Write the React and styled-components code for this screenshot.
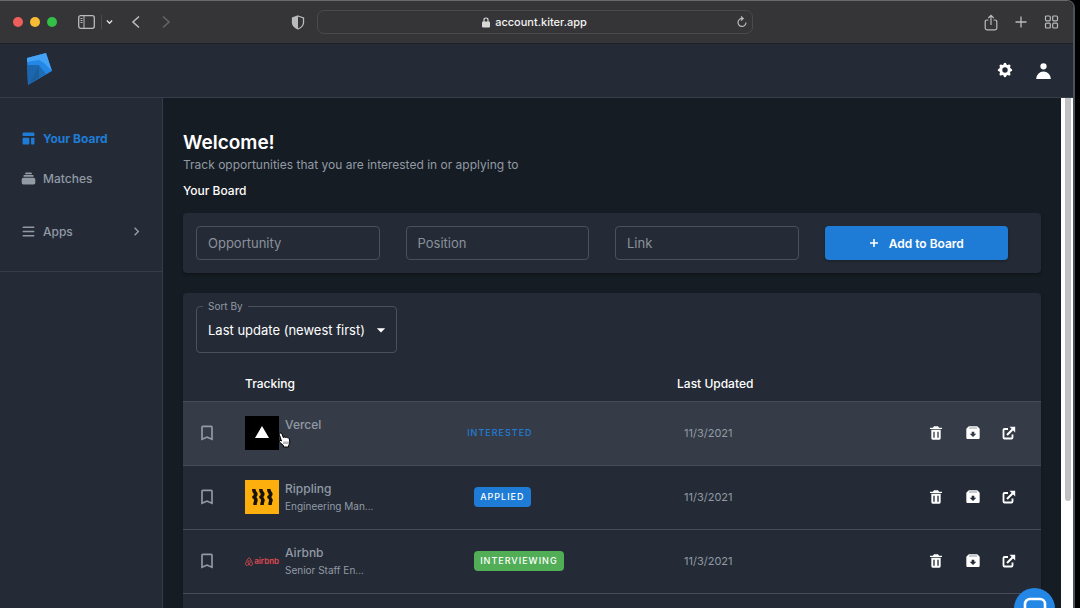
import React, { useState } from 'react';
import styled, { createGlobalStyle } from 'styled-components';
import { HiTemplate, HiCollection, HiMenu, HiUser, HiCog } from 'react-icons/hi';
import { BiSolidTrash, BiSolidArchiveIn } from 'react-icons/bi';
import { MdChevronRight, MdBookmarkBorder, MdArrowDropDown } from 'react-icons/md';

const colors = {
  paper: '#242b36',
  page: '#161c23',
  line: '#363d48',
  outline: '#4b515b',
  text: '#ffffff',
  muted: '#919aa5',
  primary: '#1f7cd6',
  success: '#51ad56'
};

const GlobalStyle = createGlobalStyle`
  * {
    box-sizing: border-box;
  }
  body {
    margin: 0;
    background: #000;
    color: ${colors.text};
    font-family: Inter, 'Liberation Sans', sans-serif;
    font-size: 12px;
    overflow: hidden;
  }
  button, input, select {
    font-family: inherit;
  }
`;

const Desktop = styled.div`
  height: 100vh;
  padding-right: 5px;
  background: #000;
`;

const Window = styled.div`
  display: flex;
  flex-direction: column;
  height: 100%;
  border-top: 1px solid #6a6a6b;
  border-right: 2px solid #4c5259;
  border-top-right-radius: 8px;
  overflow: hidden;
`;

const TitleBar = styled.header`
  display: grid;
  grid-template-columns: 1fr minmax(0, 436px) 1fr;
  align-items: center;
  flex: none;
  height: 43px;
  padding-right: 4px;
  background: #353436;
  border-bottom: 1px solid #1c2027;
`;

const BarGroup = styled.div`
  display: flex;
  align-items: center;
  gap: ${props => props.gap || 0}px;
  justify-content: ${props => (props.end ? 'flex-end' : 'flex-start')};
  padding-right: ${props => (props.end ? 10 : 12)}px;
  padding-left: 13px;
`;

const Light = styled.span`
  width: 10px;
  height: 10px;
  margin-right: 7px;
  border-radius: 50%;
  background: ${props => props.color};
`;

const PlainButton = styled.button`
  display: flex;
  align-items: center;
  justify-content: center;
  padding: 0;
  border: 0;
  background: none;
  color: ${props => props.tone || '#b9bbbd'};
  cursor: pointer;
  svg {
    display: block;
  }
`;

const SidebarToggle = styled.div`
  display: flex;
  align-items: center;
  gap: 6px;
  margin-left: 14px;
  margin-right: 18px;
`;

const Separator = styled.span`
  width: 1px;
  height: 14px;
  margin-right: -2px;
  background: #4b4b4d;
`;

const HistoryButtons = styled.div`
  display: flex;
  gap: 20px;
  margin-right: auto;
`;

const AddressBar = styled.div`
  display: grid;
  grid-template-columns: 20px 1fr 20px;
  align-items: center;
  height: 24px;
  border: 1px solid #4a4a4c;
  border-radius: 7px;
`;

const Address = styled.span`
  display: flex;
  align-items: center;
  justify-content: center;
  gap: 5px;
  color: #f2f2f2;
  font-size: 11px;
  font-weight: 500;
`;

const AppBar = styled.header`
  display: flex;
  align-items: center;
  justify-content: space-between;
  flex: none;
  height: 54px;
  padding: 0 19px 1px 26px;
  background: ${colors.paper};
  border-bottom: 1px solid ${colors.line};
`;

const AppActions = styled.div`
  display: flex;
  align-items: center;
  gap: 19px;
`;

const Body = styled.div`
  display: flex;
  flex: 1;
  min-height: 0;
`;

const Sidebar = styled.nav`
  flex: none;
  width: 163px;
  background: ${colors.paper};
  border-right: 1px solid ${colors.line};
`;

const NavSection = styled.div`
  display: flex;
  flex-direction: column;
  gap: 20px;
  padding: 30px 17px 0 20px;
`;

const AppsSection = styled(NavSection)`
  padding-top: 33px;
  padding-bottom: 30px;
  border-bottom: 1px solid ${colors.line};
`;

const NavLink = styled.a`
  display: flex;
  align-items: center;
  gap: 6px;
  height: 20px;
  color: ${props => (props.$active ? colors.primary : colors.muted)};
  font-size: 12px;
  font-weight: ${props => (props.$active ? 700 : 500)};
  text-decoration: none;
  svg:last-child:not(:first-child) {
    margin-left: auto;
  }
`;

const Main = styled.main`
  display: flex;
  flex: 1;
  flex-direction: column;
  min-width: 0;
  padding: 32px 20px 0;
  background: ${colors.page};
  overflow: hidden;
`;

const Title = styled.h1`
  margin: 0;
  font-size: 19px;
  font-weight: 600;
  line-height: 26px;
`;

const Subtitle = styled.p`
  margin: 0;
  color: ${colors.muted};
  font-size: 12px;
  line-height: 18px;
`;

const SectionTitle = styled.h2`
  margin: 8px 0 13px;
  font-size: 12px;
  font-weight: 500;
  line-height: 18px;
`;

const Card = styled.section`
  flex: ${props => (props.$fill ? '1 0 auto' : 'none')};
  background: ${colors.paper};
  border-radius: ${props => (props.$fill ? '4px 4px 0 0' : '4px')};
  box-shadow: 0 2px 3px rgba(0, 0, 0, 0.25);
`;

const AddForm = styled.form`
  display: grid;
  grid-template-columns: repeat(4, 1fr);
  gap: 26px;
  margin-bottom: 20px;
  padding: 13px 33px 13px 13px;
`;

const TextInput = styled.input`
  width: 100%;
  height: 34px;
  padding: 0 11px;
  border: 1px solid ${colors.outline};
  border-radius: 4px;
  outline: 0;
  background: transparent;
  color: ${colors.text};
  font-size: 13px;
  &::placeholder {
    color: #8b919b;
    opacity: 1;
  }
`;

const AddButton = styled.button`
  display: flex;
  align-items: center;
  justify-content: center;
  gap: 10px;
  height: 34px;
  border: 0;
  border-radius: 4px;
  background: ${colors.primary};
  box-shadow: 0 1px 3px rgba(0, 0, 0, 0.3);
  color: ${colors.text};
  font-size: 12px;
  font-weight: 600;
  cursor: pointer;
`;

const SortField = styled.div`
  position: relative;
  width: 201px;
  margin: 13px 13px 16px;
`;

const SortLabel = styled.label`
  position: absolute;
  top: -8px;
  left: 7px;
  padding: 0 5px;
  background: ${colors.paper};
  color: ${colors.muted};
  font-size: 10px;
  line-height: 16px;
`;

const SortSelect = styled.select`
  display: block;
  width: 100%;
  height: 47px;
  padding: 0 24px 0 11px;
  border: 1px solid ${colors.outline};
  border-radius: 4px;
  outline: 0;
  appearance: none;
  background: transparent;
  color: ${colors.text};
  font-size: 13px;
`;

const SortArrow = styled(MdArrowDropDown)`
  position: absolute;
  top: 14px;
  right: 6px;
  pointer-events: none;
`;

const Table = styled.table`
  width: 100%;
  border-collapse: collapse;
  table-layout: fixed;
  col:nth-child(1) {
    width: 7%;
  }
  col:nth-child(2) {
    width: 26%;
  }
  col:nth-child(3) {
    width: 24%;
  }
`;

const HeadCell = styled.th`
  height: 32px;
  padding: 0 0 2px ${props => props.$inset || 0}px;
  font-size: 12px;
  font-weight: 500;
  text-align: left;
`;

const Row = styled.tr`
  height: 64px;
  background: ${props => (props.$hovered ? '#363c47' : 'transparent')};
`;

const Cell = styled.td`
  padding: 0 0 0 ${props => props.$inset || 0}px;
  border-top: 1px solid #464c57;
  border-bottom: 1px solid #464c57;
  color: ${colors.muted};
  font-size: 11px;
`;

const Company = styled.div`
  display: flex;
  align-items: center;
  gap: 6px;
`;

const CompanyText = styled.div`
  display: flex;
  flex-direction: column;
  height: 34px;
`;

const CompanyName = styled.span`
  font-size: 12px;
  font-weight: 500;
  line-height: 18px;
`;

const Role = styled.span`
  font-size: 10px;
  line-height: 16px;
`;

const Status = styled.span`
  display: inline-block;
  margin-left: ${props => (props.$fill ? 8 : 1)}px;
  padding: 0 ${props => (props.$fill ? 6 : 0)}px;
  border-radius: 4px;
  background: ${props => props.$fill || 'transparent'};
  color: ${props => (props.$fill ? colors.text : colors.primary)};
  font-size: 9px;
  font-weight: 500;
  letter-spacing: 1px;
  line-height: 20px;
  text-transform: uppercase;
  vertical-align: middle;
`;

const RowActions = styled.div`
  display: flex;
  justify-content: flex-end;
  gap: 21px;
  padding-right: 25px;
`;

const ScrollTrack = styled.div`
  flex: none;
  width: 12px;
  padding: 0 2px 0 4px;
  background: #fff;
`;

const ScrollThumb = styled.div`
  height: 79%;
  border-radius: 0 0 3px 3px;
  background: #c1c1c4;
`;

const ChatButton = styled.button`
  position: fixed;
  right: 25px;
  bottom: -21px;
  display: flex;
  justify-content: center;
  width: 41px;
  height: 41px;
  padding: 9px 0 0;
  border: 0;
  border-radius: 50%;
  background: #2487e6;
  color: #fff;
`;

const Pointer = styled.svg`
  position: fixed;
  top: 432px;
  left: 278px;
  pointer-events: none;
`;

const KiteLogo = () => (
  <svg width="26" height="37" viewBox="0 0 26 37" role="img" aria-label="Kiter">
    <path d="M1 6 20 1 26 19 2 33Z" fill="#2387e5" />
    <path d="M1 6 20 1 26 19 18 11 13 8 1 10Z" fill="#43a1f6" />
    <path d="M1 13 13 13 2 33Z" fill="#1b66ad" />
    <path d="M13 13 13 26 2 33Z" fill="#1c5f9f" />
    <path d="M13 13 20 22 13 26Z" fill="#1d6db8" />
  </svg>
);

const ExternalIcon = () => (
  <svg width="14" height="14" viewBox="0 0 14 14" fill="none" stroke="#fff" strokeWidth="1.800">
    <path d="M6 3H2.500Q1.500 3 1.500 4V11.500Q1.500 12.500 2.500 12.500H9.500Q10.500 12.500 10.500 11.500V8.500" />
    <path d="M5 9 11 3" strokeWidth="2.200" />
    <path d="M7.500 0.800H13.200V6.500Z" fill="#fff" stroke="none" />
  </svg>
);

const VercelLogo = () => (
  <svg width="34" height="34" viewBox="0 0 34 34" role="img" aria-label="Vercel logo">
    <path d="M0 0H34V34H0Z" fill="#000" />
    <path d="M17 10 24 22H10Z" fill="#fff" />
  </svg>
);

const RipplingLogo = () => (
  <svg width="34" height="34" viewBox="0 0 34 34" role="img" aria-label="Rippling logo">
    <path d="M0 0H34V34H0Z" fill="#fdb00d" />
    {[7, 14, 22].map(x => (
      <path
        key={x}
        transform={`translate(${x} 9)`}
        d="M0 0H3.500Q3.800 2.300 5 3.300Q6.500 5.500 4.300 8Q6.500 10.500 5.300 13Q4.700 14.500 4.800 16H1.300Q1.200 13.500 2 12Q2.500 9.800 0.300 9V7Q2.300 6.500 1.600 4.500Q0 3 0 0Z"
        fill="#17120a"
      />
    ))}
  </svg>
);

const AirbnbMark = styled.span`
  display: flex;
  align-items: center;
  gap: 1px;
  width: 34px;
  color: #e0484f;
  font-size: 8px;
  font-weight: 600;
`;

const AirbnbLogo = () => (
  <AirbnbMark>
    <svg width="10" height="11" viewBox="0 0 10 11" fill="none" stroke="currentColor">
      <path d="M5 9Q3 6.500 3.500 5.500Q5 3.500 6.500 5.500Q7 6.500 5 9Q3 11 1.300 10Q0 9 1 7L4 1.500Q5 0 6 1.500L9 7Q10 9 8.700 10Q7 11 5 9Z" />
    </svg>
    airbnb
  </AirbnbMark>
);

const logos = { Vercel: VercelLogo, Rippling: RipplingLogo, Airbnb: AirbnbLogo };

const opportunities = [
  { company: 'Vercel', role: '', status: 'Interested', updated: '11/3/2021' },
  { company: 'Rippling', role: 'Engineering Man...', status: 'Applied', fill: colors.primary, updated: '11/3/2021' },
  { company: 'Airbnb', role: 'Senior Staff En...', status: 'Interviewing', fill: colors.success, updated: '11/3/2021' }
];

const BrowserBar = () => (
  <TitleBar>
    <BarGroup>
      <Light color="#ee5f5c" />
      <Light color="#f7bb36" />
      <Light color="#32c146" />
      <SidebarToggle>
        <PlainButton aria-label="Show sidebar">
          <svg width="17" height="14" viewBox="0 0 17 14" fill="none" stroke="currentColor">
            <rect x="0.700" y="0.700" width="15.600" height="12.600" rx="2" strokeWidth="1.300" />
            <path d="M6 1V13M2.500 3.500H4.500M2.500 5.500H4.500M2.500 7.500H4.500" />
          </svg>
        </PlainButton>
        <Separator />
        <PlainButton aria-label="Sidebar options" tone="#e0e0e0">
          <svg width="7" height="6" viewBox="0 0 8 6" fill="none" stroke="currentColor" strokeWidth="1.600">
            <path d="M1 1.300 4 4.300 7 1.300" />
          </svg>
        </PlainButton>
      </SidebarToggle>
      <HistoryButtons>
        <PlainButton aria-label="Back">
          <svg width="10" height="14" viewBox="0 0 10 14" fill="none" stroke="currentColor" strokeWidth="1.600">
            <path d="M8 1.500 2 7 8 12.500" />
          </svg>
        </PlainButton>
        <PlainButton aria-label="Forward" tone="#656567">
          <svg width="10" height="14" viewBox="0 0 10 14" fill="none" stroke="currentColor" strokeWidth="1.600">
            <path d="M2 1.500 8 7 2 12.500" />
          </svg>
        </PlainButton>
      </HistoryButtons>
      <PlainButton aria-label="Privacy report">
        <svg width="14" height="15" viewBox="0 0 14 15">
          <path
            d="M7 1 12.500 3V8Q12 12 7 14Q2 12 1.500 8V3Z"
            fill="none"
            stroke="currentColor"
            strokeWidth="1.300"
          />
          <path d="M7 1V14Q2 12 1.500 8V3Z" fill="currentColor" />
        </svg>
      </PlainButton>
    </BarGroup>
    <AddressBar>
      <span />
      <Address>
        <svg width="8" height="11" viewBox="0 0 8 11">
          <path d="M2 5V3Q2 1 4 1Q6 1 6 3V5" fill="none" stroke="#d8d8d8" strokeWidth="1.200" />
          <rect y="4.500" width="8" height="6" rx="1" fill="#d8d8d8" />
        </svg>
        account.kiter.app
      </Address>
      <PlainButton aria-label="Reload">
        <svg width="12" height="12" viewBox="0 0 12 12" fill="none" stroke="currentColor" strokeWidth="1.200">
          <path d="M6.500 2.500A4 4 0 1 0 10 6.500M5 0.500 7.200 2.500 5 4.600" />
        </svg>
      </PlainButton>
    </AddressBar>
    <BarGroup end gap={16}>
      <PlainButton aria-label="Share">
        <svg width="14" height="17" viewBox="0 0 14 17" fill="none" stroke="currentColor" strokeWidth="1.200">
          <path d="M4.500 6H3Q1.200 6 1.200 8V14Q1.200 15.800 3 15.800H11Q12.800 15.800 12.800 14V8Q12.800 6 11 6H9.500M7 11V1.500M4.300 4 7 1.300 9.700 4" />
        </svg>
      </PlainButton>
      <PlainButton aria-label="New tab">
        <svg width="14" height="14" viewBox="0 0 14 14" stroke="currentColor" strokeWidth="1.300">
          <path d="M7 1.500V12.500M1.500 7H12.500" />
        </svg>
      </PlainButton>
      <PlainButton aria-label="Tab overview">
        <svg width="15" height="14" viewBox="0 0 15 14" fill="none" stroke="currentColor" strokeWidth="1.200">
          <rect x="1.500" y="1" width="4.800" height="4.800" rx="1" />
          <rect x="8.700" y="1" width="4.800" height="4.800" rx="1" />
          <rect x="1.500" y="8.200" width="4.800" height="4.800" rx="1" />
          <rect x="8.700" y="8.200" width="4.800" height="4.800" rx="1" />
        </svg>
      </PlainButton>
    </BarGroup>
  </TitleBar>
);

const OpportunityRow = ({ item, hovered }) => {
  const Logo = logos[item.company];
  return (
    <Row $hovered={hovered}>
      <Cell $inset={14}>
        <PlainButton aria-label={`Bookmark ${item.company}`} tone={colors.muted}>
          <MdBookmarkBorder size={20} />
        </PlainButton>
      </Cell>
      <Cell $inset={2}>
        <Company>
          <Logo />
          <CompanyText>
            <CompanyName>{item.company}</CompanyName>
            <Role>{item.role}</Role>
          </CompanyText>
        </Company>
      </Cell>
      <Cell>
        <Status $fill={item.fill}>{item.status}</Status>
      </Cell>
      <Cell $inset={12}>{item.updated}</Cell>
      <Cell>
        <RowActions>
          <PlainButton aria-label="Delete" tone="#fff">
            <BiSolidTrash size={16} />
          </PlainButton>
          <PlainButton aria-label="Archive" tone="#fff">
            <BiSolidArchiveIn size={16} />
          </PlainButton>
          <PlainButton aria-label="Open" tone="#fff">
            <ExternalIcon />
          </PlainButton>
        </RowActions>
      </Cell>
    </Row>
  );
};

const App = () => {
  const [sort, setSort] = useState('newest');
  return (
    <Desktop>
      <GlobalStyle />
      <Window>
        <BrowserBar />
        <AppBar>
          <KiteLogo />
          <AppActions>
            <PlainButton aria-label="Settings" tone="#fff">
              <HiCog size={18} />
            </PlainButton>
            <PlainButton aria-label="Account" tone="#fff">
              <HiUser size={21} />
            </PlainButton>
          </AppActions>
        </AppBar>
        <Body>
          <Sidebar>
            <NavSection>
              <NavLink href="#board" $active>
                <HiTemplate size={17} />
                Your Board
              </NavLink>
              <NavLink href="#matches">
                <HiCollection size={17} />
                Matches
              </NavLink>
            </NavSection>
            <AppsSection>
              <NavLink href="#apps">
                <HiMenu size={17} />
                Apps
                <MdChevronRight size={17} />
              </NavLink>
            </AppsSection>
          </Sidebar>
          <Main>
            <Title>Welcome!</Title>
            <Subtitle>Track opportunities that you are interested in or applying to</Subtitle>
            <SectionTitle>Your Board</SectionTitle>
            <Card as={AddForm} onSubmit={e => e.preventDefault()}>
              <TextInput aria-label="Opportunity" placeholder="Opportunity" />
              <TextInput aria-label="Position" placeholder="Position" />
              <TextInput aria-label="Link" placeholder="Link" />
              <AddButton type="submit">
                <svg width="10" height="10" viewBox="0 0 10 10" stroke="#fff" strokeWidth="1.600">
                  <path d="M5 1V9M1 5H9" />
                </svg>
                Add to Board
              </AddButton>
            </Card>
            <Card $fill>
              <SortField>
                <SortLabel htmlFor="sort">Sort By</SortLabel>
                <SortSelect id="sort" value={sort} onChange={e => setSort(e.target.value)}>
                  <option value="newest">Last update (newest first)</option>
                  <option value="oldest">Last update (oldest first)</option>
                </SortSelect>
                <SortArrow size={20} />
              </SortField>
              <Table>
                <colgroup>
                  <col />
                  <col />
                  <col />
                  <col />
                  <col />
                </colgroup>
                <thead>
                  <tr>
                    <HeadCell />
                    <HeadCell $inset={2}>Tracking</HeadCell>
                    <HeadCell />
                    <HeadCell $inset={5}>Last Updated</HeadCell>
                    <HeadCell />
                  </tr>
                </thead>
                <tbody>
                  {opportunities.map((item, index) => (
                    <OpportunityRow key={item.company} item={item} hovered={index === 0} />
                  ))}
                </tbody>
              </Table>
            </Card>
          </Main>
          <ScrollTrack>
            <ScrollThumb />
          </ScrollTrack>
        </Body>
      </Window>
      <ChatButton aria-label="Open chat">
        <svg width="24" height="22" viewBox="0 0 24 22" fill="none" stroke="currentColor" strokeWidth="2.600">
          <rect x="2" y="2" width="20" height="17" rx="5" />
        </svg>
      </ChatButton>
      <Pointer width="13" height="16" viewBox="0 0 13 16">
        <path
          d="M2 1Q3.500 0.500 4 2L5.300 5.500Q6.300 4.500 7.300 5.500Q8.300 4.700 9.300 5.700Q11 5.300 11.300 7L11.800 10Q12 12 10.500 13.500V15H5.500V13.500L1.500 10Q0.700 8.500 2 8.300L3.500 9L1.300 2.500Q1 1.500 2 1Z"
          fill="#fff"
          stroke="#000"
        />
        <path d="M6 9.500V12M8 9.500V12M10 9.500V12" stroke="#333" strokeWidth="0.700" />
      </Pointer>
    </Desktop>
  );
};

export default App;
